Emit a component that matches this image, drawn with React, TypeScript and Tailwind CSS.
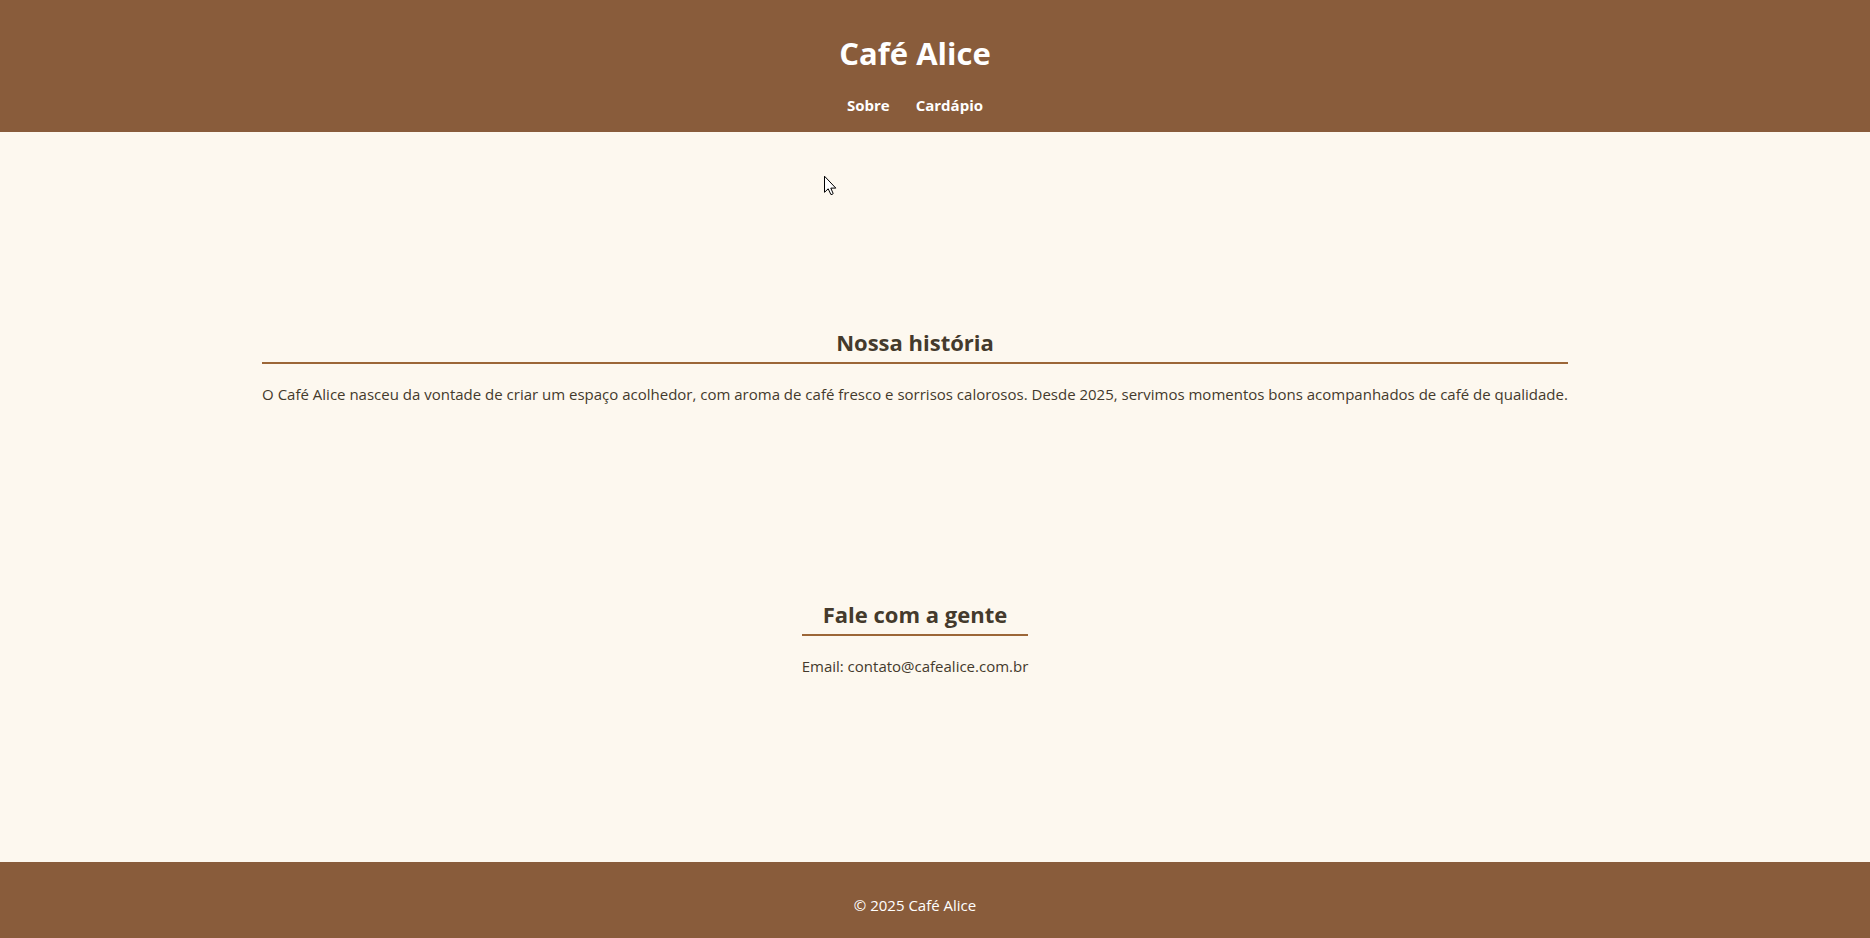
import React from "react";

const navItems = [
  { label: "Sobre", href: "#sobre" },
  { label: "Cardápio", href: "#cardapio" },
];

interface InfoSectionProps {
  id: string;
  title: string;
  children: React.ReactNode;
}

function InfoSection({ id, title, children }: InfoSectionProps) {
  return (
    <section id={id} className="pt-2 text-center">
      <h2 className="border-b-2 border-[#9c6637] pb-1 text-[22px] leading-8 font-bold">{title}</h2>
      <p className="mt-5 text-[15px] leading-5">{children}</p>
    </section>
  );
}

function Pointer() {
  return (
    <svg
      className="pointer-events-none absolute top-[175px] left-[824px]"
      width="13"
      height="21"
      viewBox="0 0 13 21"
      aria-hidden="true"
    >
      <path
        d="M0.5 1.2V17.3L4.2 13.8L6.8 19.4Q8 19.9 9.2 18.6L6.8 13.1H11.8Z"
        fill="#fff"
        stroke="#000"
        strokeWidth="1"
      />
    </svg>
  );
}

export default function App() {
  return (
    <div className="relative flex min-h-screen flex-col bg-[#fdf8ef] font-['Open_Sans','Noto_Sans',sans-serif] text-[#443a2c]">
      <header className="bg-[#895c3b] pt-[33px] pr-10 pb-[15px] text-center text-white">
        <h1 className="text-[31px] leading-10 font-bold">Café Alice</h1>
        <nav className="mt-5 flex justify-center gap-[26px] text-[15px] leading-6 font-bold">
          {navItems.map((item) => (
            <a key={item.href} href={item.href}>
              {item.label}
            </a>
          ))}
        </nav>
      </header>

      <main className="flex grow flex-col items-center justify-evenly pr-10">
        <InfoSection id="sobre" title="Nossa história">
          O Café Alice nasceu da vontade de criar um espaço acolhedor, com aroma de café fresco e
          sorrisos calorosos. Desde 2025, servimos momentos bons acompanhados de café de qualidade.
        </InfoSection>
        <InfoSection id="contato" title="Fale com a gente">
          Email: contato@cafealice.com.br
        </InfoSection>
      </main>

      <footer className="bg-[#895c3b] pt-[31px] pr-10 pb-[21px] text-center text-[15px] leading-6 text-white">
        <p>© 2025 Café Alice</p>
      </footer>

      <Pointer />
    </div>
  );
}
